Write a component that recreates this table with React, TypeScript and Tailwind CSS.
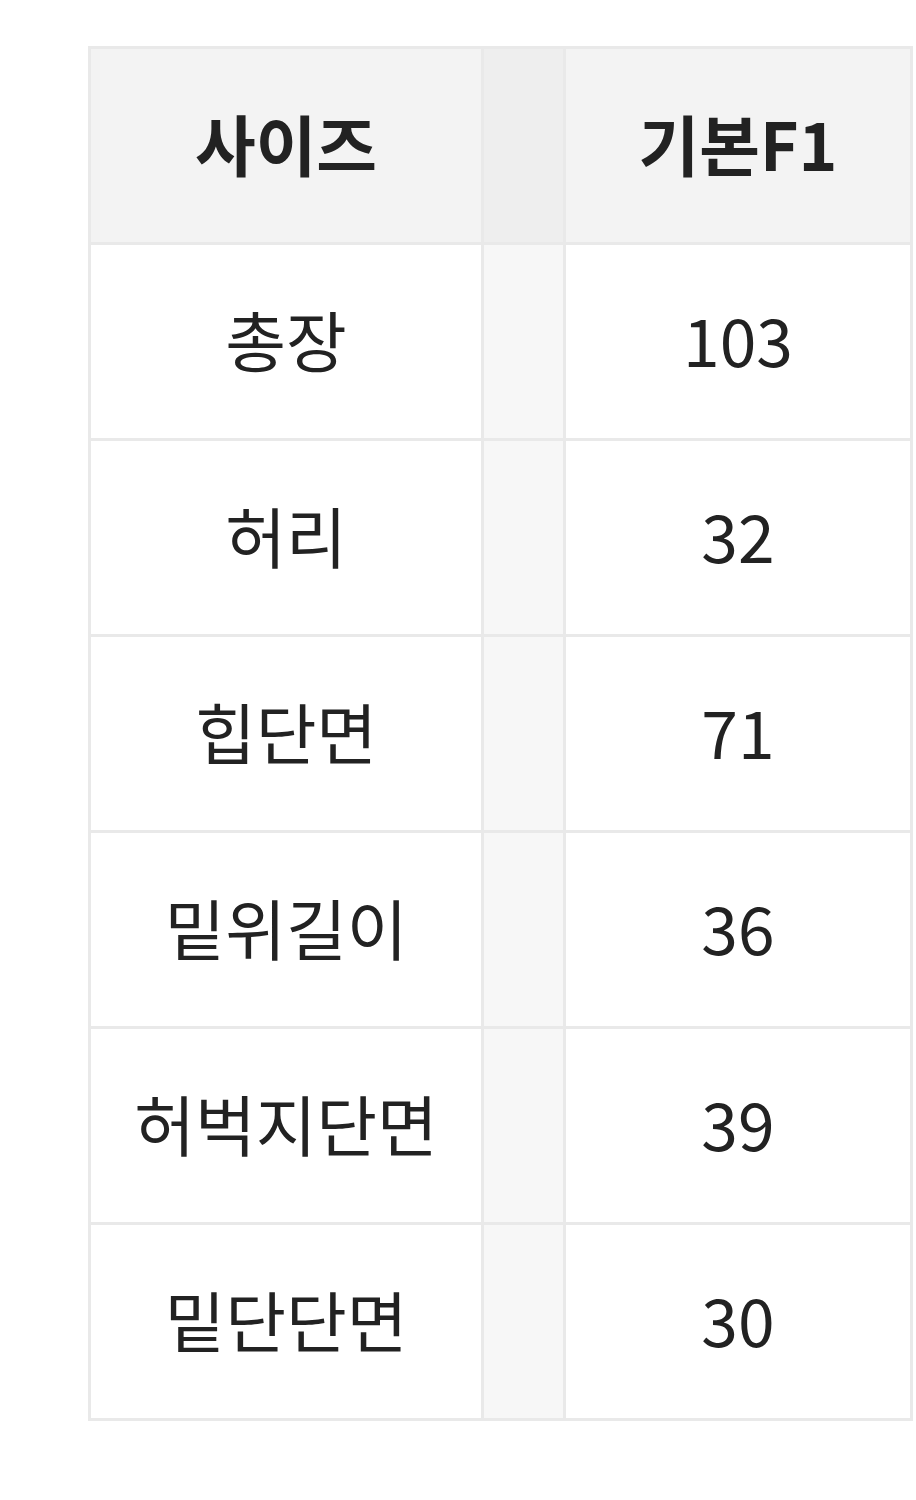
const rows: [string, string][] = [
  ["총장", "103"],
  ["허리", "32"],
  ["힙단면", "71"],
  ["밑위길이", "36"],
  ["허벅지단면", "39"],
  ["밑단단면", "30"],
]

const font = { fontFamily: '"Noto Sans CJK KR", "Noto Sans", sans-serif' }

export default function App() {
  return (
    <div className="min-h-[1500px] w-[916px] bg-white pt-[46px] pl-[88px]" style={font}>
      <div className="grid w-[825px] grid-cols-[390px_79px_344px] gap-[3px] bg-[#e9e9e9] p-[3px] text-[#222]">
        {/* header */}
        <div className="flex h-[193px] items-center justify-center bg-[#f3f3f3] pb-[8px] text-[66px] leading-none font-bold">
          사이즈
        </div>
        <div className="h-[193px] bg-[#eeeeee]" />
        <div className="flex h-[193px] items-center justify-center bg-[#f3f3f3] pb-[8px] text-[66px] leading-none font-bold">
          기본F1
        </div>

        {rows.map(([label, value]) => (
          <div key={label} className="contents">
            <div className="flex h-[193px] items-center justify-center bg-white pb-[8px] text-[66px] leading-none">
              {label}
            </div>
            <div className="h-[193px] bg-[#f7f7f7]" />
            <div className="flex h-[193px] items-center justify-center bg-white pb-[8px] text-[66px] leading-none">
              {value}
            </div>
          </div>
        ))}
      </div>
    </div>
  )
}
